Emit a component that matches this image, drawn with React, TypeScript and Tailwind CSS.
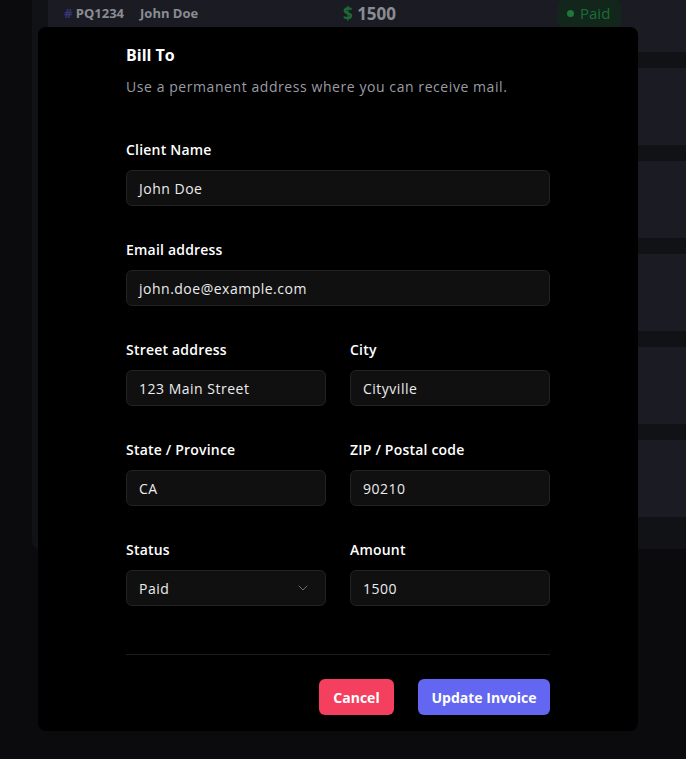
import { ChevronDown } from "lucide-react";

function Field({ label, value, select }: { label: string; value: string; select?: boolean }) {
  return (
    <div className="flex flex-col">
      <label className="text-[14px] leading-6 font-semibold text-white tracking-[0.2px]">{label}</label>
      <div className="mt-2 h-9 flex items-center justify-between rounded-md border border-[#222224] bg-[#101011] px-3 text-[14px] text-[#ececec] tracking-[0.5px]">
        <span>{value}</span>
        {select && <ChevronDown className="h-4 w-4 text-[#6b6e76] mr-[2px]" strokeWidth={1.5} />}
      </div>
    </div>
  );
}

function Row({ first }: { first?: boolean }) {
  return (
    <div className="h-[77px] shrink-0 rounded-md bg-[#1b1c23] flex items-center pl-4 text-[#8a8c94]">
      {first && (
        <>
          <div className="w-[279px] flex items-center gap-4 text-[13px] font-bold">
            <span>
              <span className="text-[#3c3577]">#</span> PQ1234
            </span>
            <span>John Doe</span>
          </div>
          <div className="w-[215px] text-[17px] font-bold">
            <span className="text-[#1b6b36]">$</span> 1500
          </div>
          <div className="h-7 w-[63px] rounded-md bg-[#12261b] flex items-center gap-[6px] pl-[9px] text-[15px] text-[#1b6e37] font-medium">
            <span className="h-[7px] w-[7px] rounded-full bg-[#1b7a3b]" />
            Paid
          </div>
        </>
      )}
    </div>
  );
}

export default function App() {
  return (
    <div className="relative h-[759px] w-full overflow-hidden bg-[#0b0b0d] font-['Open_Sans',sans-serif]">
      <div className="-mt-[41px] ml-8 w-[720px] rounded-bl-lg bg-[#111216] px-4 pt-4 pb-8 flex flex-col gap-4">
        <Row first />
        <Row />
        <Row />
        <Row />
        <Row />
        <Row />
      </div>

      <div className="absolute left-[38px] top-[27px] w-[600px] rounded-lg bg-black px-[88px] pt-4 pb-4">
        <h2 className="text-[16px] leading-6 font-bold text-white">Bill To</h2>
        <p className="mt-2.5 text-[14px] leading-5 text-[#9a9ca3] tracking-[0.57px]">
          Use a permanent address where you can receive mail.
        </p>
        <div className="mt-[41px] flex flex-col gap-8">
          <Field label="Client Name" value="John Doe" />
          <Field label="Email address" value="john.doe@example.com" />
          <div className="grid grid-cols-2 gap-6">
            <Field label="Street address" value="123 Main Street" />
            <Field label="City" value="Cityville" />
          </div>
          <div className="grid grid-cols-2 gap-6">
            <Field label="State / Province" value="CA" />
            <Field label="ZIP / Postal code" value="90210" />
          </div>
          <div className="grid grid-cols-2 gap-6">
            <Field label="Status" value="Paid" select />
            <Field label="Amount" value="1500" />
          </div>
        </div>
        <div className="mt-12 border-t border-[#1d1d1f]" />
        <div className="mt-6 flex justify-end gap-6">
          <button className="h-9 w-[75px] rounded-md bg-[#f43f5e] text-[14px] font-bold text-white">
            Cancel
          </button>
          <button className="h-9 w-[132px] rounded-md bg-[#6366f1] text-[14px] font-bold text-white">
            Update Invoice
          </button>
        </div>
      </div>
    </div>
  );
}
